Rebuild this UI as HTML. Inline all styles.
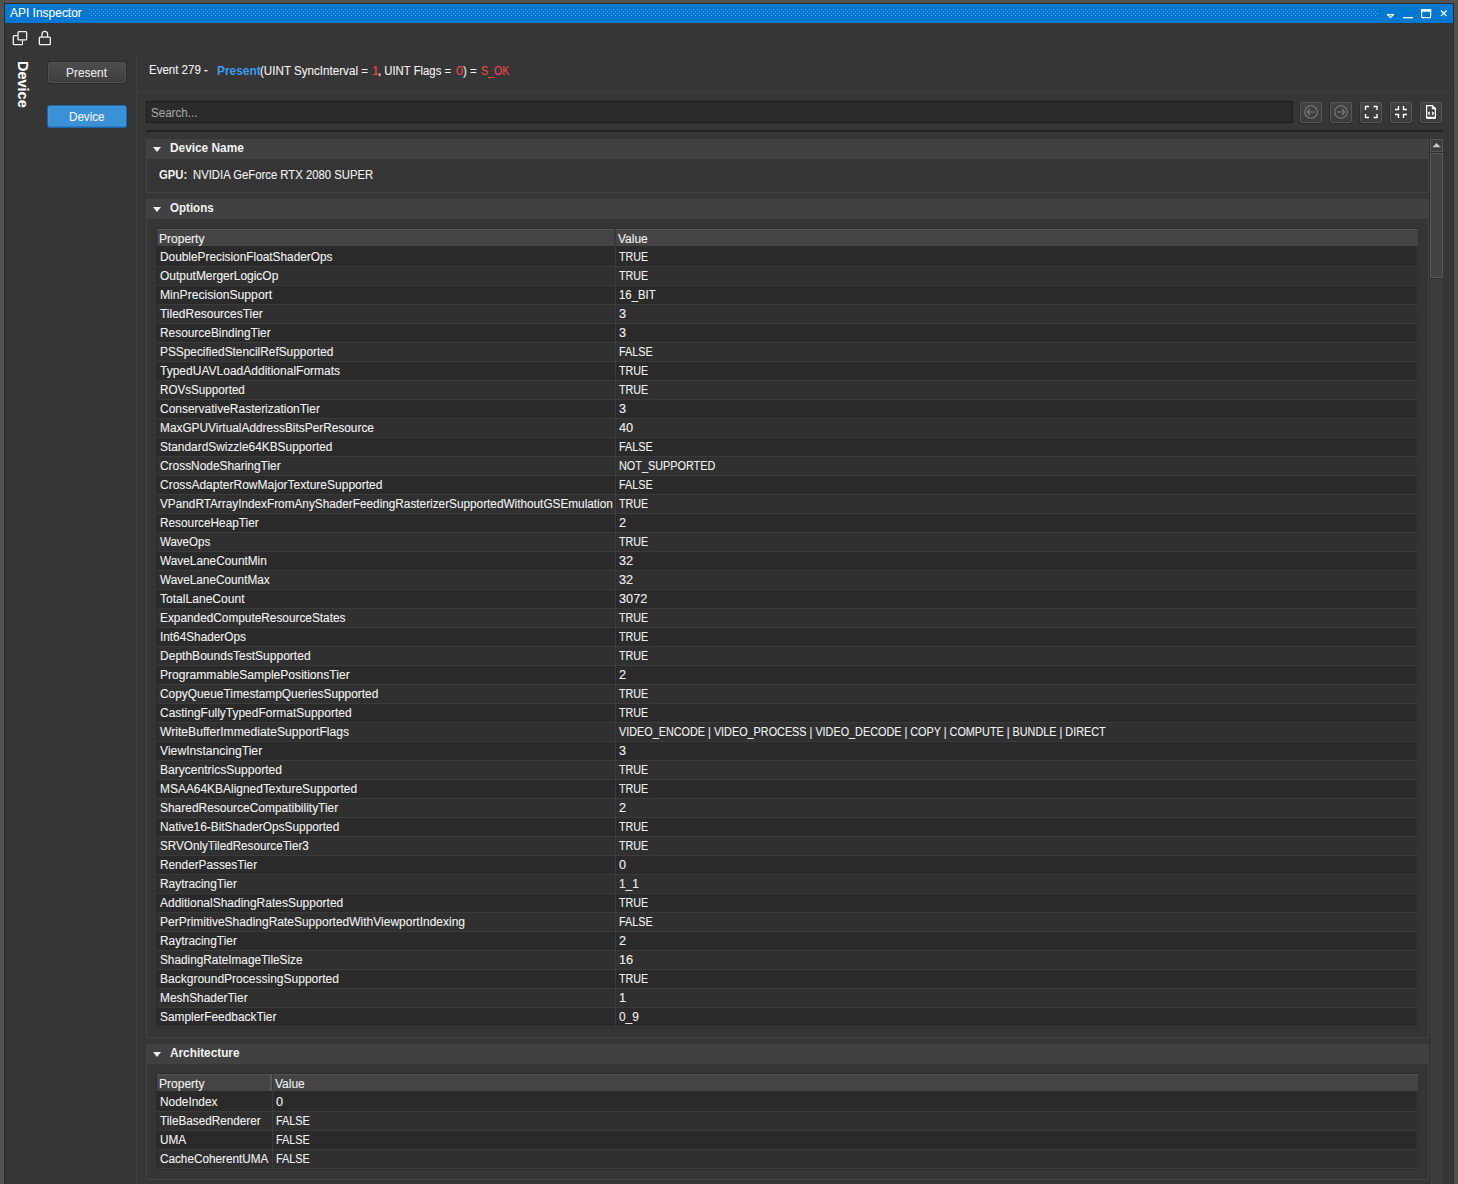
<!DOCTYPE html><html><head><meta charset="utf-8"><style>*{margin:0;padding:0;box-sizing:border-box}
html,body{width:1458px;height:1184px;overflow:hidden;background:#525252;font-family:"Liberation Sans",sans-serif;color:#f0f0f0}
div,span,svg{position:absolute}
.t{white-space:pre;font-size:12px;line-height:14px;transform-origin:0 0;display:block;-webkit-text-stroke:0.1px currentColor}
.dk{background:#2a2a2a}
.r0{background:#2a2a2a}
.r1{background:#303030}
.sep{background:#3b3b3b;height:1px}
.hdr{background:#414141}
.bod{background:#363636;border:1px solid #3d3d3d;border-top:none}
.nb{width:22px;height:21px;border:1px solid #575757;border-radius:2px;background:linear-gradient(#434343,#3b3b3b);box-shadow:-1px 1px 0 #2a2a2a, 0 1px 0 #2a2a2a}
</style></head><body>
<div style="left:4px;top:3px;width:1450px;height:1181px;background:#2a2a2a;"></div>
<div style="left:5px;top:4px;width:1448px;height:19px;background:#0077d0;"></div>
<div style="left:5px;top:23px;width:1448px;height:1161px;background:#363636;"></div>
<svg style="left:89px;top:9px" width="1290" height="8"><defs><pattern id="dp" x="0" y="0" width="4" height="4" patternUnits="userSpaceOnUse"><rect x="0" y="0" width="1" height="1" fill="#62a8e6"/><rect x="2" y="2" width="1" height="1" fill="#62a8e6"/></pattern></defs><rect x="0" y="0" width="1290" height="7" fill="url(#dp)"/></svg>
<span class="t" style="left:10px;top:6px;font-size:12px;transform:scaleX(0.9970);color:#ffffff;">API Inspector</span>
<svg style="left:1384px;top:8px" width="66" height="12" viewBox="0 0 66 12"><path d="M3.6 6.8 H9.4 L6.5 9.7 Z" fill="none" stroke="#fff" stroke-width="1.1" stroke-linejoin="round"/><rect x="3" y="5.9" width="7" height="1.3" fill="#fff"/><rect x="19" y="9" width="10" height="1.3" fill="#fff"/><rect x="37.6" y="1.6" width="9" height="8" rx="0.8" fill="none" stroke="#fff" stroke-width="1.2"/><rect x="37" y="1" width="10.2" height="2.8" fill="#fff"/><path d="M56.9 2.5 L62.6 8.2 M62.6 2.5 L56.9 8.2" stroke="#fff" stroke-width="1.2"/></svg>
<svg style="left:12px;top:30px" width="18" height="17" viewBox="0 0 18 17"><rect x="6" y="1.65" width="8.6" height="8.2" rx="0.9" fill="none" stroke="#f2f2f2" stroke-width="1.3"/><path d="M5.2 5.6 H2.2 a0.9 0.9 0 0 0 -0.9 0.9 V13.8 a0.9 0.9 0 0 0 0.9 0.9 H9.6 a0.9 0.9 0 0 0 0.9 -0.9 V10.6" fill="none" stroke="#f2f2f2" stroke-width="1.3"/></svg>
<svg style="left:38px;top:30px" width="15" height="17" viewBox="0 0 15 17"><path d="M4 7 V4.4 a2.8 3 0 0 1 5.6 0 V7" fill="none" stroke="#f2f2f2" stroke-width="1.3"/><rect x="1.35" y="7.2" width="11" height="7.5" rx="0.9" fill="none" stroke="#f2f2f2" stroke-width="1.3"/></svg>
<span class="t" style="left:32px;top:60.5px;font-size:15.5px;line-height:18px;font-weight:bold;color:#fff;transform:rotate(90deg) scaleX(0.935)">Device</span>
<div style="left:47px;top:61px;width:80px;height:23px;background:#2b2b2b;border-radius:3px"></div>
<div style="left:48px;top:62px;width:78px;height:21px;background:linear-gradient(#4c4c4c,#3f3f3f);border:1px solid #505050;border-radius:2px"></div>
<span class="t" style="left:65.5px;top:66px;font-size:12px;transform:scaleX(0.9913);color:#e8e8e8;">Present</span>
<div style="left:47px;top:105px;width:80px;height:23px;background:#1b64a6;border-radius:3px"></div>
<div style="left:48px;top:106px;width:78px;height:21px;background:#3a91d5;border:1px solid #4197d8;border-bottom-color:#2f80c6;border-radius:2px"></div>
<span class="t" style="left:68.5px;top:110px;font-size:12px;transform:scaleX(0.9689);color:#f2f2f2;">Device</span>
<div style="left:136px;top:52px;width:1px;height:1132px;background:#3e3e3e;"></div>
<div style="left:137px;top:91px;width:1316px;height:1px;background:#3e3e3e;"></div>
<span class="t" style="left:148.5px;top:63px;font-size:12px;transform:scaleX(0.9585);">Event 279 -</span>
<span class="t" style="left:217.2px;top:64px;font-size:12px;transform:scaleX(0.9905);font-weight:bold;-webkit-text-stroke:0;color:#3d9be9;">Present</span>
<span class="t" style="left:260.2px;top:64px;font-size:12px;transform:scaleX(0.9686);">(UINT SyncInterval = </span>
<span class="t" style="left:372.1px;top:64px;font-size:12px;transform:scaleX(1.0598);color:#f04848;">1</span>
<span class="t" style="left:377.7px;top:64px;font-size:12px;transform:scaleX(0.9433);">, UINT Flags = </span>
<span class="t" style="left:456.4px;top:64px;font-size:12px;transform:scaleX(1.0598);color:#f04848;">0</span>
<span class="t" style="left:463.1px;top:64px;font-size:12px;transform:scaleX(0.9461);">) = </span>
<span class="t" style="left:480.6px;top:64px;font-size:12px;transform:scaleX(0.8848);color:#f04848;">S_OK</span>
<div style="left:146px;top:101px;width:1147px;height:22px;background:#2b2b2b;border:1px solid #1e1e1e"></div>
<span class="t" style="left:151px;top:106px;font-size:12px;transform:scaleX(0.9652);color:#a2a2a2;">Search...</span>
<div class="nb" style="left:1300px;top:102px"></div>
<div class="nb" style="left:1330px;top:102px"></div>
<div class="nb" style="left:1360px;top:102px"></div>
<div class="nb" style="left:1390px;top:102px"></div>
<div class="nb" style="left:1420px;top:102px"></div>
<svg style="left:1300px;top:102px" width="142" height="21" viewBox="0 0 142 21"><circle cx="11" cy="10" r="6.3" fill="none" stroke="#7d7d7d" stroke-width="1.1"/><path d="M7.3 10 H14.8 M10 7 L7.2 10 L10 13" fill="none" stroke="#7d7d7d" stroke-width="1.1"/><circle cx="41" cy="10" r="6.3" fill="none" stroke="#7d7d7d" stroke-width="1.1"/><path d="M37.2 10 H44.7 M42 7 L44.8 10 L42 13" fill="none" stroke="#7d7d7d" stroke-width="1.1"/><path d="M65.5 8 V4.5 H69 M73.5 4.5 H77 V8 M77 12 V15.5 H73.5 M69 15.5 H65.5 V12" fill="none" stroke="#fff" stroke-width="1.4"/><path d="M95 7.5 H98.5 V4 M103.5 4 V7.5 H107 M107 12.5 H103.5 V16 M98.5 16 V12.5 H95" fill="none" stroke="#fff" stroke-width="1.4"/><path d="M126.6 3.6 H132.4 L135.4 6.6 V15.3 a0.8 0.8 0 0 1 -0.8 0.8 H127.4 a0.8 0.8 0 0 1 -0.8 -0.8 Z" fill="none" stroke="#fff" stroke-width="1.3"/><path d="M131.8 3.2 V7.2 H135.8 Z" fill="#fff"/><rect x="126" y="14.8" width="10" height="1.9" rx="0.6" fill="#fff"/><path d="M129.9 9.9 L128.3 11.3 L129.9 12.7 M132.1 9.9 L133.7 11.3 L132.1 12.7" fill="none" stroke="#fff" stroke-width="1.15"/></svg>
<div style="left:146px;top:130px;width:1297px;height:2px;background:#222222;"></div>
<div style="left:146px;top:139px;width:1283px;height:20px;background:#414141;"></div>
<svg style="left:153px;top:147px" width="8" height="5" viewBox="0 0 8 5"><path d="M0 0 H8 L4 5 Z" fill="#f0f0f0"/></svg>
<span class="t" style="left:169.5px;top:141px;font-size:12px;transform:scaleX(0.9874);font-weight:bold;-webkit-text-stroke:0;color:#f2f2f2;">Device Name</span>
<div style="left:146px;top:159px;width:1283px;height:34px;background:#353535;border:1px solid #434343;border-top:none"></div>
<span class="t" style="left:158.5px;top:168px;font-size:12px;transform:scaleX(0.9436);font-weight:bold;-webkit-text-stroke:0;color:#f2f2f2;">GPU:</span>
<span class="t" style="left:192.6px;top:168px;font-size:12px;transform:scaleX(0.9426);">NVIDIA GeForce RTX 2080 SUPER</span>
<div style="left:146px;top:199px;width:1283px;height:20px;background:#414141;"></div>
<svg style="left:153px;top:207px" width="8" height="5" viewBox="0 0 8 5"><path d="M0 0 H8 L4 5 Z" fill="#f0f0f0"/></svg>
<span class="t" style="left:169.5px;top:201px;font-size:12px;transform:scaleX(0.9622);font-weight:bold;-webkit-text-stroke:0;color:#f2f2f2;">Options</span>
<div style="left:146px;top:219px;width:1283px;height:819px;background:#353535;border:1px solid #434343;border-top:none"></div>
<div style="left:156px;top:228px;width:1263px;height:1px;background:#2c2c2c;"></div>
<div style="left:157px;top:229px;width:1261px;height:17px;background:#444444;border-top:1px solid #555555"></div>
<div style="left:614px;top:229px;width:2px;height:17px;background:#383838;"></div>
<span class="t" style="left:158.5px;top:232px;font-size:12px;transform:scaleX(1.0017);">Property</span>
<span class="t" style="left:618px;top:232px;font-size:12px;transform:scaleX(0.9995);">Value</span>
<div style="left:157px;top:246px;width:1260px;height:20px;background:#2a2a2a;"></div>
<div style="left:157px;top:266px;width:1260px;height:1px;background:#3b3b3b;"></div>
<div style="left:157px;top:267px;width:1260px;height:18px;background:#303030;"></div>
<div style="left:157px;top:285px;width:1260px;height:1px;background:#3b3b3b;"></div>
<div style="left:157px;top:286px;width:1260px;height:18px;background:#2a2a2a;"></div>
<div style="left:157px;top:304px;width:1260px;height:1px;background:#3b3b3b;"></div>
<div style="left:157px;top:305px;width:1260px;height:18px;background:#303030;"></div>
<div style="left:157px;top:323px;width:1260px;height:1px;background:#3b3b3b;"></div>
<div style="left:157px;top:324px;width:1260px;height:18px;background:#2a2a2a;"></div>
<div style="left:157px;top:342px;width:1260px;height:1px;background:#3b3b3b;"></div>
<div style="left:157px;top:343px;width:1260px;height:18px;background:#303030;"></div>
<div style="left:157px;top:361px;width:1260px;height:1px;background:#3b3b3b;"></div>
<div style="left:157px;top:362px;width:1260px;height:18px;background:#2a2a2a;"></div>
<div style="left:157px;top:380px;width:1260px;height:1px;background:#3b3b3b;"></div>
<div style="left:157px;top:381px;width:1260px;height:18px;background:#303030;"></div>
<div style="left:157px;top:399px;width:1260px;height:1px;background:#3b3b3b;"></div>
<div style="left:157px;top:400px;width:1260px;height:18px;background:#2a2a2a;"></div>
<div style="left:157px;top:418px;width:1260px;height:1px;background:#3b3b3b;"></div>
<div style="left:157px;top:419px;width:1260px;height:18px;background:#303030;"></div>
<div style="left:157px;top:437px;width:1260px;height:1px;background:#3b3b3b;"></div>
<div style="left:157px;top:438px;width:1260px;height:18px;background:#2a2a2a;"></div>
<div style="left:157px;top:456px;width:1260px;height:1px;background:#3b3b3b;"></div>
<div style="left:157px;top:457px;width:1260px;height:18px;background:#303030;"></div>
<div style="left:157px;top:475px;width:1260px;height:1px;background:#3b3b3b;"></div>
<div style="left:157px;top:476px;width:1260px;height:18px;background:#2a2a2a;"></div>
<div style="left:157px;top:494px;width:1260px;height:1px;background:#3b3b3b;"></div>
<div style="left:157px;top:495px;width:1260px;height:18px;background:#303030;"></div>
<div style="left:157px;top:513px;width:1260px;height:1px;background:#3b3b3b;"></div>
<div style="left:157px;top:514px;width:1260px;height:18px;background:#2a2a2a;"></div>
<div style="left:157px;top:532px;width:1260px;height:1px;background:#3b3b3b;"></div>
<div style="left:157px;top:533px;width:1260px;height:18px;background:#303030;"></div>
<div style="left:157px;top:551px;width:1260px;height:1px;background:#3b3b3b;"></div>
<div style="left:157px;top:552px;width:1260px;height:18px;background:#2a2a2a;"></div>
<div style="left:157px;top:570px;width:1260px;height:1px;background:#3b3b3b;"></div>
<div style="left:157px;top:571px;width:1260px;height:18px;background:#303030;"></div>
<div style="left:157px;top:589px;width:1260px;height:1px;background:#3b3b3b;"></div>
<div style="left:157px;top:590px;width:1260px;height:18px;background:#2a2a2a;"></div>
<div style="left:157px;top:608px;width:1260px;height:1px;background:#3b3b3b;"></div>
<div style="left:157px;top:609px;width:1260px;height:18px;background:#303030;"></div>
<div style="left:157px;top:627px;width:1260px;height:1px;background:#3b3b3b;"></div>
<div style="left:157px;top:628px;width:1260px;height:18px;background:#2a2a2a;"></div>
<div style="left:157px;top:646px;width:1260px;height:1px;background:#3b3b3b;"></div>
<div style="left:157px;top:647px;width:1260px;height:18px;background:#303030;"></div>
<div style="left:157px;top:665px;width:1260px;height:1px;background:#3b3b3b;"></div>
<div style="left:157px;top:666px;width:1260px;height:18px;background:#2a2a2a;"></div>
<div style="left:157px;top:684px;width:1260px;height:1px;background:#3b3b3b;"></div>
<div style="left:157px;top:685px;width:1260px;height:18px;background:#303030;"></div>
<div style="left:157px;top:703px;width:1260px;height:1px;background:#3b3b3b;"></div>
<div style="left:157px;top:704px;width:1260px;height:18px;background:#2a2a2a;"></div>
<div style="left:157px;top:722px;width:1260px;height:1px;background:#3b3b3b;"></div>
<div style="left:157px;top:723px;width:1260px;height:18px;background:#303030;"></div>
<div style="left:157px;top:741px;width:1260px;height:1px;background:#3b3b3b;"></div>
<div style="left:157px;top:742px;width:1260px;height:18px;background:#2a2a2a;"></div>
<div style="left:157px;top:760px;width:1260px;height:1px;background:#3b3b3b;"></div>
<div style="left:157px;top:761px;width:1260px;height:18px;background:#303030;"></div>
<div style="left:157px;top:779px;width:1260px;height:1px;background:#3b3b3b;"></div>
<div style="left:157px;top:780px;width:1260px;height:18px;background:#2a2a2a;"></div>
<div style="left:157px;top:798px;width:1260px;height:1px;background:#3b3b3b;"></div>
<div style="left:157px;top:799px;width:1260px;height:18px;background:#303030;"></div>
<div style="left:157px;top:817px;width:1260px;height:1px;background:#3b3b3b;"></div>
<div style="left:157px;top:818px;width:1260px;height:18px;background:#2a2a2a;"></div>
<div style="left:157px;top:836px;width:1260px;height:1px;background:#3b3b3b;"></div>
<div style="left:157px;top:837px;width:1260px;height:18px;background:#303030;"></div>
<div style="left:157px;top:855px;width:1260px;height:1px;background:#3b3b3b;"></div>
<div style="left:157px;top:856px;width:1260px;height:18px;background:#2a2a2a;"></div>
<div style="left:157px;top:874px;width:1260px;height:1px;background:#3b3b3b;"></div>
<div style="left:157px;top:875px;width:1260px;height:18px;background:#303030;"></div>
<div style="left:157px;top:893px;width:1260px;height:1px;background:#3b3b3b;"></div>
<div style="left:157px;top:894px;width:1260px;height:18px;background:#2a2a2a;"></div>
<div style="left:157px;top:912px;width:1260px;height:1px;background:#3b3b3b;"></div>
<div style="left:157px;top:913px;width:1260px;height:18px;background:#303030;"></div>
<div style="left:157px;top:931px;width:1260px;height:1px;background:#3b3b3b;"></div>
<div style="left:157px;top:932px;width:1260px;height:18px;background:#2a2a2a;"></div>
<div style="left:157px;top:950px;width:1260px;height:1px;background:#3b3b3b;"></div>
<div style="left:157px;top:951px;width:1260px;height:18px;background:#303030;"></div>
<div style="left:157px;top:969px;width:1260px;height:1px;background:#3b3b3b;"></div>
<div style="left:157px;top:970px;width:1260px;height:18px;background:#2a2a2a;"></div>
<div style="left:157px;top:988px;width:1260px;height:1px;background:#3b3b3b;"></div>
<div style="left:157px;top:989px;width:1260px;height:18px;background:#303030;"></div>
<div style="left:157px;top:1007px;width:1260px;height:1px;background:#3b3b3b;"></div>
<div style="left:157px;top:1008px;width:1260px;height:18px;background:#2a2a2a;"></div>
<div style="left:157px;top:1026px;width:1260px;height:1px;background:#3b3b3b;"></div>
<div style="left:1417px;top:246px;width:1px;height:781px;background:#3b3b3b;"></div>
<div style="left:1418px;top:246px;width:1px;height:782px;background:#2c2c2c;"></div>
<div style="left:157px;top:1027px;width:1262px;height:1px;background:#2c2c2c;"></div>
<div style="left:156px;top:228px;width:1px;height:800px;background:#2c2c2c;"></div>
<div style="left:615px;top:246px;width:1px;height:781px;background:#3b3b3b;"></div>
<span class="t" style="left:159.5px;top:250px;font-size:12px;transform:scaleX(0.9872);">DoublePrecisionFloatShaderOps</span>
<span class="t" style="left:619px;top:250px;font-size:12px;transform:scaleX(0.8924);">TRUE</span>
<span class="t" style="left:159.5px;top:269px;font-size:12px;transform:scaleX(0.9962);">OutputMergerLogicOp</span>
<span class="t" style="left:619px;top:269px;font-size:12px;transform:scaleX(0.8924);">TRUE</span>
<span class="t" style="left:159.5px;top:288px;font-size:12px;transform:scaleX(1.0120);">MinPrecisionSupport</span>
<span class="t" style="left:619px;top:288px;font-size:12px;transform:scaleX(0.9467);">16_BIT</span>
<span class="t" style="left:159.5px;top:307px;font-size:12px;transform:scaleX(0.9970);">TiledResourcesTier</span>
<span class="t" style="left:619px;top:307px;font-size:12px;transform:scaleX(1.0598);">3</span>
<span class="t" style="left:159.5px;top:326px;font-size:12px;transform:scaleX(0.9909);">ResourceBindingTier</span>
<span class="t" style="left:619px;top:326px;font-size:12px;transform:scaleX(1.0598);">3</span>
<span class="t" style="left:159.5px;top:345px;font-size:12px;transform:scaleX(0.9887);">PSSpecifiedStencilRefSupported</span>
<span class="t" style="left:619px;top:345px;font-size:12px;transform:scaleX(0.9067);">FALSE</span>
<span class="t" style="left:159.5px;top:364px;font-size:12px;transform:scaleX(1.0014);">TypedUAVLoadAdditionalFormats</span>
<span class="t" style="left:619px;top:364px;font-size:12px;transform:scaleX(0.8924);">TRUE</span>
<span class="t" style="left:159.5px;top:383px;font-size:12px;transform:scaleX(0.9709);">ROVsSupported</span>
<span class="t" style="left:619px;top:383px;font-size:12px;transform:scaleX(0.8924);">TRUE</span>
<span class="t" style="left:159.5px;top:402px;font-size:12px;transform:scaleX(0.9976);">ConservativeRasterizationTier</span>
<span class="t" style="left:619px;top:402px;font-size:12px;transform:scaleX(1.0598);">3</span>
<span class="t" style="left:159.5px;top:421px;font-size:12px;transform:scaleX(0.9879);">MaxGPUVirtualAddressBitsPerResource</span>
<span class="t" style="left:619px;top:421px;font-size:12px;transform:scaleX(1.0611);">40</span>
<span class="t" style="left:159.5px;top:440px;font-size:12px;transform:scaleX(0.9904);">StandardSwizzle64KBSupported</span>
<span class="t" style="left:619px;top:440px;font-size:12px;transform:scaleX(0.9067);">FALSE</span>
<span class="t" style="left:159.5px;top:459px;font-size:12px;transform:scaleX(0.9922);">CrossNodeSharingTier</span>
<span class="t" style="left:619px;top:459px;font-size:12px;transform:scaleX(0.9048);">NOT_SUPPORTED</span>
<span class="t" style="left:159.5px;top:478px;font-size:12px;transform:scaleX(1.0017);">CrossAdapterRowMajorTextureSupported</span>
<span class="t" style="left:619px;top:478px;font-size:12px;transform:scaleX(0.9067);">FALSE</span>
<span class="t" style="left:159.5px;top:497px;font-size:12px;transform:scaleX(0.9820);">VPandRTArrayIndexFromAnyShaderFeedingRasterizerSupportedWithoutGSEmulation</span>
<span class="t" style="left:619px;top:497px;font-size:12px;transform:scaleX(0.8924);">TRUE</span>
<span class="t" style="left:159.5px;top:516px;font-size:12px;transform:scaleX(0.9846);">ResourceHeapTier</span>
<span class="t" style="left:619px;top:516px;font-size:12px;transform:scaleX(1.0598);">2</span>
<span class="t" style="left:159.5px;top:535px;font-size:12px;transform:scaleX(0.9605);">WaveOps</span>
<span class="t" style="left:619px;top:535px;font-size:12px;transform:scaleX(0.8924);">TRUE</span>
<span class="t" style="left:159.5px;top:554px;font-size:12px;transform:scaleX(0.9866);">WaveLaneCountMin</span>
<span class="t" style="left:619px;top:554px;font-size:12px;transform:scaleX(1.0611);">32</span>
<span class="t" style="left:159.5px;top:573px;font-size:12px;transform:scaleX(0.9833);">WaveLaneCountMax</span>
<span class="t" style="left:619px;top:573px;font-size:12px;transform:scaleX(1.0611);">32</span>
<span class="t" style="left:159.5px;top:592px;font-size:12px;transform:scaleX(1.0063);">TotalLaneCount</span>
<span class="t" style="left:619px;top:592px;font-size:12px;transform:scaleX(1.0611);">3072</span>
<span class="t" style="left:159.5px;top:611px;font-size:12px;transform:scaleX(0.9859);">ExpandedComputeResourceStates</span>
<span class="t" style="left:619px;top:611px;font-size:12px;transform:scaleX(0.8924);">TRUE</span>
<span class="t" style="left:159.5px;top:630px;font-size:12px;transform:scaleX(0.9834);">Int64ShaderOps</span>
<span class="t" style="left:619px;top:630px;font-size:12px;transform:scaleX(0.8924);">TRUE</span>
<span class="t" style="left:159.5px;top:649px;font-size:12px;transform:scaleX(1.0031);">DepthBoundsTestSupported</span>
<span class="t" style="left:619px;top:649px;font-size:12px;transform:scaleX(0.8924);">TRUE</span>
<span class="t" style="left:159.5px;top:668px;font-size:12px;transform:scaleX(1.0076);">ProgrammableSamplePositionsTier</span>
<span class="t" style="left:619px;top:668px;font-size:12px;transform:scaleX(1.0598);">2</span>
<span class="t" style="left:159.5px;top:687px;font-size:12px;transform:scaleX(0.9909);">CopyQueueTimestampQueriesSupported</span>
<span class="t" style="left:619px;top:687px;font-size:12px;transform:scaleX(0.8924);">TRUE</span>
<span class="t" style="left:159.5px;top:706px;font-size:12px;transform:scaleX(0.9971);">CastingFullyTypedFormatSupported</span>
<span class="t" style="left:619px;top:706px;font-size:12px;transform:scaleX(0.8924);">TRUE</span>
<span class="t" style="left:159.5px;top:725px;font-size:12px;transform:scaleX(1.0111);">WriteBufferImmediateSupportFlags</span>
<span class="t" style="left:619px;top:725px;font-size:12px;transform:scaleX(0.9024);">VIDEO_ENCODE | VIDEO_PROCESS | VIDEO_DECODE | COPY | COMPUTE | BUNDLE | DIRECT</span>
<span class="t" style="left:159.5px;top:744px;font-size:12px;transform:scaleX(1.0146);">ViewInstancingTier</span>
<span class="t" style="left:619px;top:744px;font-size:12px;transform:scaleX(1.0598);">3</span>
<span class="t" style="left:159.5px;top:763px;font-size:12px;transform:scaleX(1.0042);">BarycentricsSupported</span>
<span class="t" style="left:619px;top:763px;font-size:12px;transform:scaleX(0.8924);">TRUE</span>
<span class="t" style="left:159.5px;top:782px;font-size:12px;transform:scaleX(0.9951);">MSAA64KBAlignedTextureSupported</span>
<span class="t" style="left:619px;top:782px;font-size:12px;transform:scaleX(0.8924);">TRUE</span>
<span class="t" style="left:159.5px;top:801px;font-size:12px;transform:scaleX(0.9960);">SharedResourceCompatibilityTier</span>
<span class="t" style="left:619px;top:801px;font-size:12px;transform:scaleX(1.0598);">2</span>
<span class="t" style="left:159.5px;top:820px;font-size:12px;transform:scaleX(0.9880);">Native16-BitShaderOpsSupported</span>
<span class="t" style="left:619px;top:820px;font-size:12px;transform:scaleX(0.8924);">TRUE</span>
<span class="t" style="left:159.5px;top:839px;font-size:12px;transform:scaleX(0.9731);">SRVOnlyTiledResourceTier3</span>
<span class="t" style="left:619px;top:839px;font-size:12px;transform:scaleX(0.8924);">TRUE</span>
<span class="t" style="left:159.5px;top:858px;font-size:12px;transform:scaleX(0.9812);">RenderPassesTier</span>
<span class="t" style="left:619px;top:858px;font-size:12px;transform:scaleX(1.0598);">0</span>
<span class="t" style="left:159.5px;top:877px;font-size:12px;transform:scaleX(0.9909);">RaytracingTier</span>
<span class="t" style="left:619px;top:877px;font-size:12px;transform:scaleX(0.9910);">1_1</span>
<span class="t" style="left:159.5px;top:896px;font-size:12px;transform:scaleX(0.9987);">AdditionalShadingRatesSupported</span>
<span class="t" style="left:619px;top:896px;font-size:12px;transform:scaleX(0.8924);">TRUE</span>
<span class="t" style="left:159.5px;top:915px;font-size:12px;transform:scaleX(0.9992);">PerPrimitiveShadingRateSupportedWithViewportIndexing</span>
<span class="t" style="left:619px;top:915px;font-size:12px;transform:scaleX(0.9067);">FALSE</span>
<span class="t" style="left:159.5px;top:934px;font-size:12px;transform:scaleX(0.9909);">RaytracingTier</span>
<span class="t" style="left:619px;top:934px;font-size:12px;transform:scaleX(1.0598);">2</span>
<span class="t" style="left:159.5px;top:953px;font-size:12px;transform:scaleX(0.9834);">ShadingRateImageTileSize</span>
<span class="t" style="left:619px;top:953px;font-size:12px;transform:scaleX(1.0611);">16</span>
<span class="t" style="left:159.5px;top:972px;font-size:12px;transform:scaleX(1.0010);">BackgroundProcessingSupported</span>
<span class="t" style="left:619px;top:972px;font-size:12px;transform:scaleX(0.8924);">TRUE</span>
<span class="t" style="left:159.5px;top:991px;font-size:12px;transform:scaleX(0.9926);">MeshShaderTier</span>
<span class="t" style="left:619px;top:991px;font-size:12px;transform:scaleX(1.0598);">1</span>
<span class="t" style="left:159.5px;top:1010px;font-size:12px;transform:scaleX(0.9898);">SamplerFeedbackTier</span>
<span class="t" style="left:619px;top:1010px;font-size:12px;transform:scaleX(0.9910);">0_9</span>
<div style="left:146px;top:1044px;width:1283px;height:20px;background:#414141;"></div>
<svg style="left:153px;top:1052px" width="8" height="5" viewBox="0 0 8 5"><path d="M0 0 H8 L4 5 Z" fill="#f0f0f0"/></svg>
<span class="t" style="left:169.5px;top:1046px;font-size:12px;transform:scaleX(0.9834);font-weight:bold;-webkit-text-stroke:0;color:#f2f2f2;">Architecture</span>
<div style="left:146px;top:1064px;width:1283px;height:116px;background:#353535;border:1px solid #434343;border-top:none"></div>
<div style="left:156px;top:1073px;width:1263px;height:1px;background:#2c2c2c;"></div>
<div style="left:157px;top:1074px;width:1261px;height:17px;background:#444444;border-top:1px solid #555555"></div>
<div style="left:270px;top:1074px;width:2px;height:17px;background:#585858;"></div>
<div style="left:272px;top:1074px;width:1px;height:17px;background:#363636;"></div>
<span class="t" style="left:158.5px;top:1077px;font-size:12px;transform:scaleX(1.0017);">Property</span>
<span class="t" style="left:275px;top:1077px;font-size:12px;transform:scaleX(0.9995);">Value</span>
<div style="left:157px;top:1091px;width:1260px;height:20px;background:#2a2a2a;"></div>
<div style="left:157px;top:1111px;width:1260px;height:1px;background:#3b3b3b;"></div>
<div style="left:157px;top:1112px;width:1260px;height:18px;background:#303030;"></div>
<div style="left:157px;top:1130px;width:1260px;height:1px;background:#3b3b3b;"></div>
<div style="left:157px;top:1131px;width:1260px;height:18px;background:#2a2a2a;"></div>
<div style="left:157px;top:1149px;width:1260px;height:1px;background:#3b3b3b;"></div>
<div style="left:157px;top:1150px;width:1260px;height:18px;background:#303030;"></div>
<div style="left:157px;top:1168px;width:1260px;height:1px;background:#3b3b3b;"></div>
<div style="left:1417px;top:1091px;width:1px;height:78px;background:#3b3b3b;"></div>
<div style="left:1418px;top:1091px;width:1px;height:79px;background:#2c2c2c;"></div>
<div style="left:157px;top:1169px;width:1262px;height:1px;background:#2c2c2c;"></div>
<div style="left:156px;top:1073px;width:1px;height:97px;background:#2c2c2c;"></div>
<div style="left:272px;top:1091px;width:1px;height:78px;background:#3b3b3b;"></div>
<span class="t" style="left:159.5px;top:1095px;font-size:12px;transform:scaleX(0.9908);">NodeIndex</span>
<span class="t" style="left:276px;top:1095px;font-size:12px;transform:scaleX(1.0598);">0</span>
<span class="t" style="left:159.5px;top:1114px;font-size:12px;transform:scaleX(0.9771);">TileBasedRenderer</span>
<span class="t" style="left:276px;top:1114px;font-size:12px;transform:scaleX(0.9067);">FALSE</span>
<span class="t" style="left:159.5px;top:1133px;font-size:12px;transform:scaleX(0.9824);">UMA</span>
<span class="t" style="left:276px;top:1133px;font-size:12px;transform:scaleX(0.9067);">FALSE</span>
<span class="t" style="left:159.5px;top:1152px;font-size:12px;transform:scaleX(0.9780);">CacheCoherentUMA</span>
<span class="t" style="left:276px;top:1152px;font-size:12px;transform:scaleX(0.9067);">FALSE</span>
<div style="left:1429px;top:139px;width:1px;height:1045px;background:#2e2e2e;"></div>
<div style="left:1430px;top:139px;width:13px;height:13px;background:#3e3e3e;border:1px solid #575757"></div>
<svg style="left:1432px;top:142px" width="9" height="6" viewBox="0 0 9 6"><path d="M0.3 5.2 L4.5 1 L8.7 5.2 Z" fill="#c8c8c8"/></svg>
<div style="left:1430px;top:152px;width:13px;height:1px;background:#2e2e2e;"></div>
<div style="left:1430px;top:153px;width:13px;height:125px;background:#424242;border:1px solid #585858"></div>
<div style="left:1430px;top:278px;width:13px;height:1px;background:#2e2e2e;"></div>
<div style="left:1430px;top:279px;width:13px;height:905px;background:#3d3d3d;"></div>
</body></html>
